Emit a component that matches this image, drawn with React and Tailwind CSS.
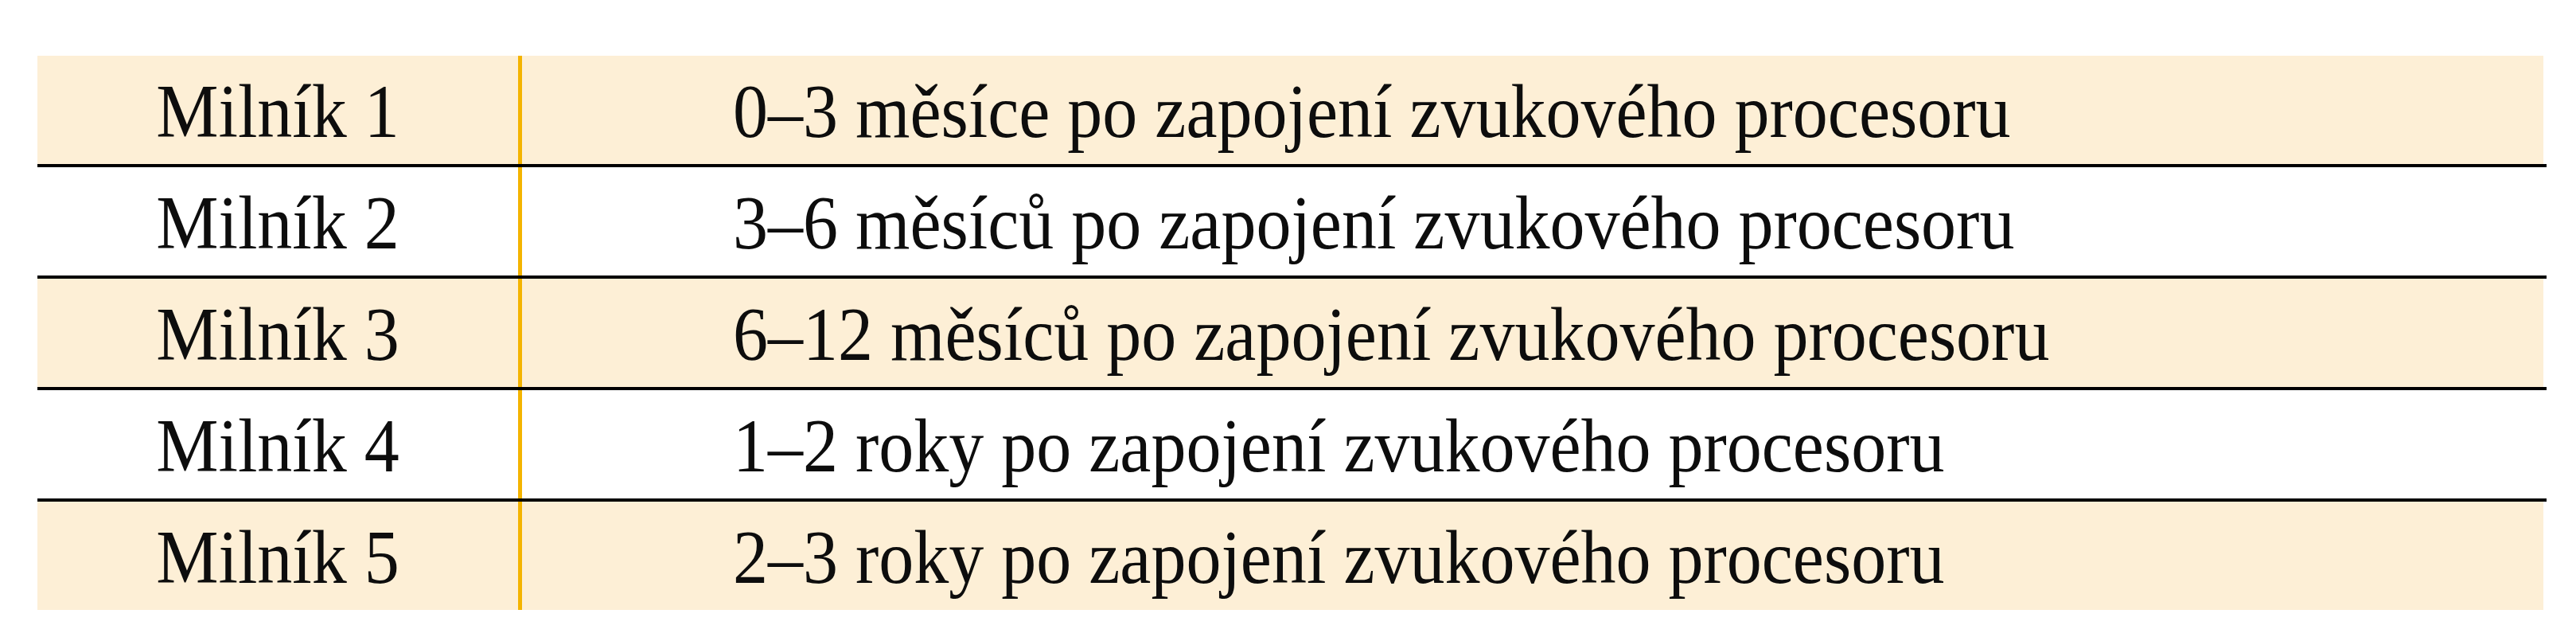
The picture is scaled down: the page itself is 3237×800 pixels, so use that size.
const rows = [
  { label: 'Milník 1', text: '0–3 měsíce po zapojení zvukového procesoru', shaded: true },
  { label: 'Milník 2', text: '3–6 měsíců po zapojení zvukového procesoru', shaded: false },
  { label: 'Milník 3', text: '6–12 měsíců po zapojení zvukového procesoru', shaded: true },
  { label: 'Milník 4', text: '1–2 roky po zapojení zvukového procesoru', shaded: false },
  { label: 'Milník 5', text: '2–3 roky po zapojení zvukového procesoru', shaded: true },
];

function Row({ label, text, shaded }) {
  return (
    <div className={`flex h-[136px] w-[3149px] ${shaded ? 'bg-[#fdefd6]' : 'bg-white'}`}>
      <div className="flex w-[609px] items-center justify-center border-r-[5px] border-[#f4b400] pt-[10px]">
        <span className="inline-block origin-[50%_84%] scale-y-[1.07]">{label}</span>
      </div>
      <div className="flex flex-1 items-center pl-[265px] pt-[10px]">
        <span className="inline-block origin-[50%_84%] scale-y-[1.07]">{text}</span>
      </div>
    </div>
  );
}

export default function App() {
  return (
    <div className="h-[800px] w-[3237px] bg-white pl-[47px] pt-[70px]">
      <div
        className="flex flex-col text-[88px] leading-none text-[#0d0d0d]"
        style={{ fontFamily: '"Liberation Serif", "DejaVu Serif", serif' }}
      >
        {rows.map((r, i) => (
          <div key={r.label}>
            {i > 0 && <div className="h-[4px] w-[3153px] bg-black" />}
            <Row {...r} />
          </div>
        ))}
      </div>
    </div>
  );
}
